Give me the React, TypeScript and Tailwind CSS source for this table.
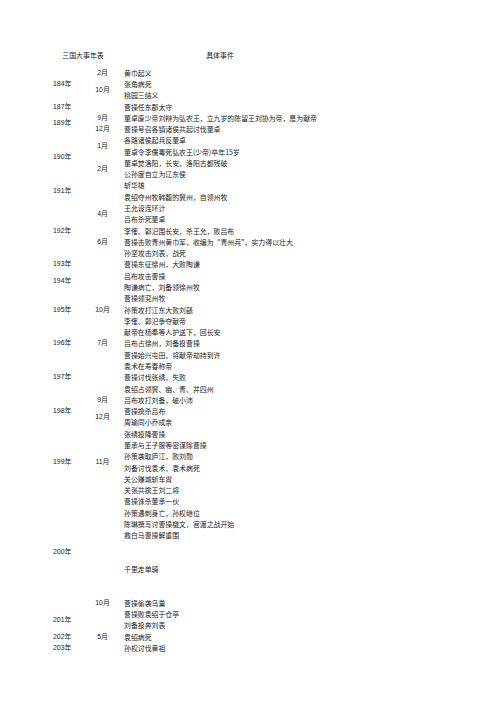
import React from "react";

const years = [
  { t: "184年", c: "row-start-1 row-span-3" },
  { t: "187年", c: "row-start-4" },
  { t: "189年", c: "row-start-5 row-span-2" },
  { t: "190年", c: "row-start-7 row-span-4" },
  { t: "191年", c: "row-start-11 row-span-2" },
  { t: "192年", c: "row-start-13 row-span-5" },
  { t: "193年", c: "row-start-18" },
  { t: "194年", c: "row-start-19 row-span-2" },
  { t: "195年", c: "row-start-21 row-span-3" },
  { t: "196年", c: "row-start-24 row-span-3" },
  { t: "197年", c: "row-start-27 row-span-3" },
  { t: "198年", c: "row-start-30 row-span-3" },
  { t: "199年", c: "row-start-33 row-span-6" },
  { t: "200年", c: "row-start-43 row-span-2" },
  { t: "201年", c: "row-start-49 row-span-2" },
  { t: "202年", c: "row-start-51" },
  { t: "203年", c: "row-start-52" },
];

const months = [
  { t: "2月", c: "row-start-1" },
  { t: "10月", c: "row-start-2 row-span-2" },
  { t: "9月", c: "row-start-5" },
  { t: "12月", c: "row-start-6" },
  { t: "1月", c: "row-start-7 row-span-2" },
  { t: "2月", c: "row-start-9 row-span-2" },
  { t: "4月", c: "row-start-13 row-span-2" },
  { t: "6月", c: "row-start-15 row-span-3" },
  { t: "10月", c: "row-start-22" },
  { t: "7月", c: "row-start-25" },
  { t: "9月", c: "row-start-30" },
  { t: "12月", c: "row-start-31 row-span-2" },
  { t: "11月", c: "row-start-33 row-span-6" },
  { t: "10月", c: "row-start-48" },
  { t: "5月", c: "row-start-51" },
];

const events = [
  "黄巾起义",
  "张角病死",
  "桃园三结义",
  "曹操任东郡太守",
  "董卓废少帝刘辩为弘农王，立九岁的陈留王刘协为帝，是为献帝",
  "曹操号召各镇诸侯共起讨伐董卓",
  "各路诸侯起兵反董卓",
  "董卓令李儒毒死弘农王(少帝)卒年15岁",
  "董卓焚洛阳，长安，洛阳古都残破",
  "公孙度自立为辽东侯",
  "斩华雄",
  "袁绍夺州牧韩馥的冀州，自领州牧",
  "王允设连环计",
  "吕布杀死董卓",
  "李傕、郭汜围长安，杀王允，败吕布",
  "曹操击败青州黄巾军，收编为“青州兵”，实力得以壮大",
  "孙坚攻击刘表，战死",
  "曹操东征徐州，大败陶谦",
  "吕布攻击曹操",
  "陶谦病亡，刘备领徐州牧",
  "曹操领兖州牧",
  "孙策攻打江东大败刘繇",
  "李傕、郭汜争夺献帝",
  "献帝在杨奉等人护送下，回长安",
  "吕布占徐州，刘备投曹操",
  "曹操始兴屯田，将献帝劫持到许",
  "袁术在寿春称帝",
  "曹操讨伐张绣，失败",
  "袁绍占领冀、幽、青、并四州",
  "吕布攻打刘备，破小沛",
  "曹操擒杀吕布",
  "周瑜同小乔成亲",
  "张绣投降曹操",
  "董承与王子服等密谋除曹操",
  "孙策袭取庐江，败刘勋",
  "刘备讨伐袁术，袁术病死",
  "关公赚城斩车胄",
  "关张共擒王刘二将",
  "曹操诛杀董承一伙",
  "孙策遇刺身亡，孙权继位",
  "陈琳撰写讨曹操檄文，官渡之战开始",
  "救白马曹操解重围",
  "",
  "",
  "千里走单骑",
  "",
  "",
  "曹操偷袭乌巢",
  "曹操败袁绍于仓亭",
  "刘备投奔刘表",
  "袁绍病死",
  "孙权讨伐黄祖",
];

export default function App() {
  return (
    <div className="w-[496px] h-[702px] bg-white text-[#222] text-[6.9px] leading-none font-['Liberation_Sans','Noto_Sans_CJK_SC',sans-serif] pt-[50px] pl-[48px]">
      <div className="flex h-[11.29px] items-center font-['Noto_Sans_CJK_SC',sans-serif]">
        <div className="w-[70px] text-center">三国大事年表</div>
        <div className="w-[192px] ml-[6px] text-center">具体事件</div>
      </div>
      <div className="mt-[6.2px] grid grid-cols-[42px_25px_1fr] grid-rows-[repeat(52,11.29px)]">
        {years.map((y, i) => (
          <div key={"y" + i} className={"col-start-1 flex items-center pl-[5px] " + y.c}>
            {y.t}
          </div>
        ))}
        {months.map((m, i) => (
          <div key={"m" + i} className={"col-start-2 flex items-center justify-center " + m.c}>
            {m.t}
          </div>
        ))}
        <div className="col-start-3 row-[1/-1] flex flex-col pl-[9px] font-['Noto_Sans_CJK_SC',sans-serif]">
          {events.map((e, i) => (
            <div key={i} className="h-[11.29px] flex items-center whitespace-nowrap">
              {e}
            </div>
          ))}
        </div>
      </div>
    </div>
  );
}
